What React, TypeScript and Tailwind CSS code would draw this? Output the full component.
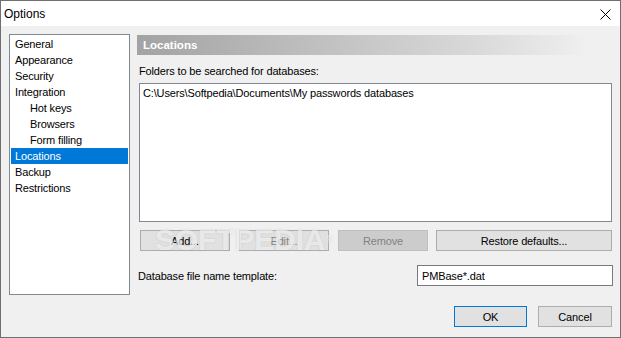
import React from "react";

const items: { label: string; indent?: boolean; selected?: boolean }[] = [
  { label: "General" },
  { label: "Appearance" },
  { label: "Security" },
  { label: "Integration" },
  { label: "Hot keys", indent: true },
  { label: "Browsers", indent: true },
  { label: "Form filling", indent: true },
  { label: "Locations", selected: true },
  { label: "Backup" },
  { label: "Restrictions" },
];

function Btn({
  children,
  w,
  disabled,
  dark,
  primary,
}: {
  children: React.ReactNode;
  w: string;
  disabled?: boolean;
  dark?: boolean;
  primary?: boolean;
}) {
  const base = "h-[21px] flex items-center justify-center shrink-0 ";
  const look = primary
    ? "bg-[#e1e1e1] border border-[#0078d7] text-black"
    : dark
    ? "bg-[#cccccc] border border-[#bfbfbf] text-[#838383]"
    : disabled
    ? "bg-[#e1e1e1] border border-[#adadad] text-[#838383]"
    : "bg-[#e1e1e1] border border-[#adadad] text-black";
  return <div className={base + look + " " + w}>{children}</div>;
}

export default function App() {
  return (
    <div
      className="w-[621px] h-[338px] border border-[#6f6f6f] flex flex-col text-[11px] leading-[16px] tracking-[-0.15px] text-black overflow-hidden"
      style={{ fontFamily: '"Liberation Sans", Arial, sans-serif' }}
    >
      {/* Title bar */}
      <div className="h-[25px] bg-white flex items-center justify-between pl-[3px] pr-[9px] shrink-0">
        <span className="text-[12px] tracking-normal">Options</span>
        <svg width="11" height="11" viewBox="0 0 11 11" className="mt-[1px]">
          <path d="M0.5 0.5 L10.5 10.5 M10.5 0.5 L0.5 10.5" stroke="#000" strokeWidth="1" />
        </svg>
      </div>
      {/* Body */}
      <div className="flex-1 bg-[#f0f0f0] relative flex pt-[8px] pl-[8px] pr-[8px]">
        {/* Left tree list */}
        <div className="w-[121px] h-[261px] bg-white border border-[#828790] pt-[1px] px-[1px] shrink-0">
          {items.map((it) => (
            <div
              key={it.label}
              className={
                "h-[16px] flex items-center " +
                (it.indent ? "pl-[19px] " : "pl-[4px] ") +
                (it.selected ? "bg-[#0078d7] text-white" : "")
              }
            >
              {it.label}
            </div>
          ))}
        </div>
        {/* Right panel */}
        <div className="ml-[7px] flex-1 flex flex-col">
          <div
            className="h-[20px] mt-[1px] flex items-center pl-[6px] text-white font-bold text-[11.5px] tracking-normal"
            style={{ background: "linear-gradient(to right, #a3a3a3 0%, #d8d8d8 70%, #f0f0f0 95%)" }}
          >
            Locations
          </div>
          <div className="mt-[8px] ml-[2px] h-[16px]">Folders to be searched for databases:</div>
          <div className="mt-[4px] ml-[2px] w-[473px] h-[139px] bg-white border border-[#828790] pl-[3px] pt-[1px]">
            C:\Users\Softpedia\Documents\My passwords databases
          </div>
          <div className="mt-[8px] ml-[3px] flex">
            <Btn w="w-[90px]">Add...</Btn>
            <div className="w-[9px] shrink-0" />
            <Btn w="w-[90px]" disabled>
              Edit...
            </Btn>
            <div className="w-[9px] shrink-0" />
            <Btn w="w-[90px]" dark>
              Remove
            </Btn>
            <div className="w-[8px] shrink-0" />
            <Btn w="w-[176px]">Restore defaults...</Btn>
          </div>
          <div className="mt-[14px] ml-[1px] flex items-center justify-between w-[475px]">
            <span>Database file name template:</span>
            <div className="w-[196px] h-[21px] bg-white border border-[#7a7a7a] flex items-center pl-[4px]">
              PMBase*.dat
            </div>
          </div>
          <div className="mt-[20px] flex justify-end gap-[11px] w-[475px]">
            <Btn w="w-[73px]" primary>
              OK
            </Btn>
            <Btn w="w-[74px]">Cancel</Btn>
          </div>
        </div>
        {/* Watermark */}
        <div
          className="absolute left-[154px] top-[199px] text-[30px] leading-[30px] font-bold text-white/60 pointer-events-none select-none"
          style={{ textShadow: "0 0 2px rgba(150,150,150,0.35)" }}
        >
          SOFTPEDIA<span className="text-[10px] align-top">®</span>
        </div>
      </div>
    </div>
  );
}
